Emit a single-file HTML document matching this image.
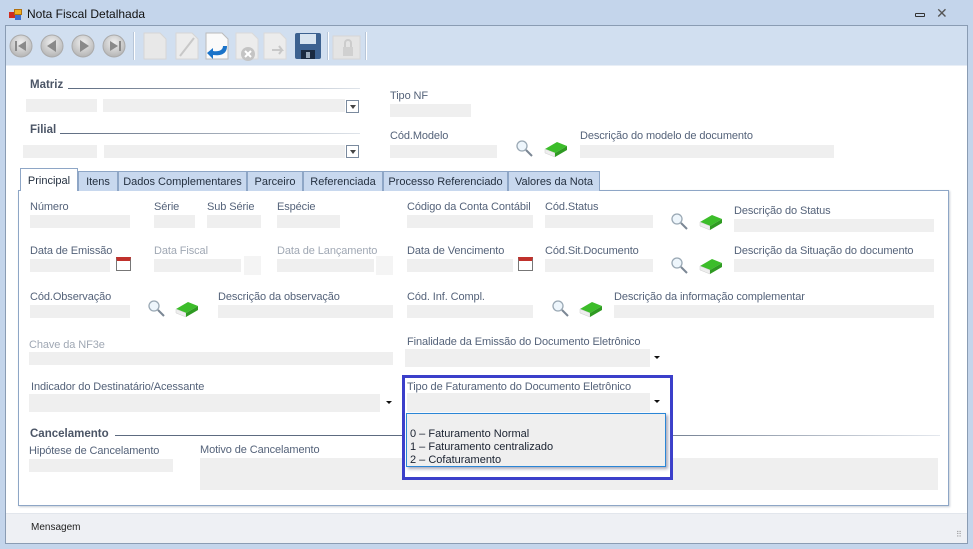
<!DOCTYPE html>
<html><head><meta charset="utf-8"><style>
*{margin:0;padding:0;box-sizing:border-box}
body{width:973px;height:549px;position:relative;overflow:hidden;background:#c4d5eb;font-family:"Liberation Sans",sans-serif;font-size:12px;color:#4d5b6e}
.a{position:absolute}
.l{position:absolute;white-space:nowrap;font-size:11px;color:#55637a;letter-spacing:-0.1px;top:0}
.f{position:absolute;background:#efefef}
.dis{color:#a0a8b4}
.dd{position:absolute;background:#fff;width:13px;height:13px;border:1px solid #7a8a9e}
.dd:after{content:"";position:absolute;left:3px;top:4px;border-left:3px solid transparent;border-right:3px solid transparent;border-top:4px solid #444}
.dt{position:absolute;width:14px;height:18px;background:#fff}
.dt:after{content:"";position:absolute;left:4px;top:7px;border-left:3px solid transparent;border-right:3px solid transparent;border-top:3px solid #111}
.b{position:absolute;font-weight:bold;font-size:11.5px;color:#4b5566}
.hl{position:absolute;height:1px;background:linear-gradient(to right,#5d6b80,#dfe4ea)}
.tab{position:absolute;top:171px;height:20px;background:#c8d8ee;border:1px solid #8ea6c6;border-bottom:none;font-size:11px;color:#243040;padding-top:4px;text-align:center;white-space:nowrap;overflow:hidden}
.cal{position:absolute;width:15px;height:14px;background:#fff;border:1px solid #777;border-top:4px solid #c0312c}
.calx{position:absolute;width:17px;height:19px;background:#f4f4f4}
</style></head><body>
<div class="a" style="left:9px;top:9px;width:13px;height:11px">
<div class="a" style="left:0;top:3px;width:6px;height:6px;background:#d02c20"></div>
<div class="a" style="left:5px;top:0;width:8px;height:6px;background:#f0b020;border:1px solid #b07010"></div>
<div class="a" style="left:6px;top:6px;width:6px;height:5px;background:#3d6fd0"></div></div>
<div class="a" style="left:27px;top:7px;font-size:12px;color:#111">Nota Fiscal Detalhada</div>
<div class="a" style="left:915px;top:13px;width:10px;height:4px;border:1px solid #333;border-radius:1px"></div>
<div class="a" style="left:936px;top:5px;font-size:14px;color:#555">✕</div>
<div class="a" style="left:5px;top:25px;width:963px;height:519px;background:#fff;border:1px solid #8a9cb3"></div>
<div class="a" style="left:6px;top:26px;width:961px;height:40px;background:#d1dff0;border-bottom:1px solid #e8eef6"></div>
<svg class="a" style="left:6px;top:28px" width="380" height="36">
<defs><radialGradient id="g" cx="50%" cy="35%" r="60%"><stop offset="0" stop-color="#f0f0f0"/><stop offset="1" stop-color="#b9b9b9"/></radialGradient></defs>
<g fill="url(#g)" stroke="#aaa"><circle cx="15" cy="18" r="11"/><circle cx="46" cy="18" r="11"/><circle cx="77" cy="18" r="11"/><circle cx="108" cy="18" r="11"/></g>
<g fill="#8a8a8a"><rect x="9" y="13" width="2" height="10"/><path d="M20 13 L12 18 L20 23Z"/><path d="M50 12 L41 18 L50 24Z"/><path d="M74 12 L83 18 L74 24Z"/><path d="M104 13 L112 18 L104 23Z"/><rect x="113" y="13" width="2" height="10"/></g>
<rect x="128" y="4" width="1" height="28" fill="#fff"/><rect x="127" y="4" width="1" height="28" fill="#b8c6d8"/>
<path d="M138 5h16l6 6v20h-22z" fill="#e8e8e8" stroke="#d6d6d6"/>
<path d="M170 5h16l6 6v20h-22z" fill="#ececec" stroke="#d6d6d6"/><path d="M174 28l14-18" stroke="#c8c8c8" stroke-width="2"/>
<path d="M200 5h16l6 6v20h-22z" fill="#fafafa" stroke="#bbb"/><path d="M221 18c0 8-6 10-14 9l0 4-6-6 6-5v3c6 1 10-1 10-5z" fill="#1a73c9"/>
<path d="M230 5h16l6 6v20h-22z" fill="#ececec" stroke="#dadada"/><circle cx="242" cy="26" r="7" fill="#c4c4c4"/><path d="M239 23l6 6M245 23l-6 6" stroke="#fff" stroke-width="2"/>
<path d="M258 5h16l6 6v20h-22z" fill="#ececec" stroke="#dadada"/><path d="M266 22h10l-3-4m3 4-3 4" stroke="#c8c8c8" stroke-width="2" fill="none"/>
<rect x="289" y="5" width="26" height="26" rx="2" fill="#3c6190"/><rect x="294" y="6" width="16" height="10" fill="#d8e4f0"/><rect x="295" y="22" width="14" height="9" fill="#1a2a40"/><rect x="300" y="24" width="4" height="6" fill="#9ab"/>
<rect x="322" y="4" width="1" height="28" fill="#fff"/><rect x="321" y="4" width="1" height="28" fill="#b8c6d8"/>
<rect x="327" y="8" width="27" height="23" fill="#e4e4e4" stroke="#d6d6d6"/><rect x="337" y="19" width="10" height="9" fill="#d0d0d0"/><path d="M339 19v-4a3 3 0 0 1 6 0v4" stroke="#ccc" stroke-width="2" fill="none"/>
<rect x="360" y="4" width="1" height="28" fill="#fff"/><rect x="359" y="4" width="1" height="28" fill="#b8c6d8"/>
</svg>
<div class="b" style="left:30px;top:79px">Matriz</div><div class="hl" style="left:68px;top:88px;width:292px"></div>
<div class="f" style="left:26px;top:99px;width:71px;height:13px"></div><div class="f" style="left:103px;top:99px;width:242px;height:13px"></div><div class="dd" style="left:346px;top:100px"></div>
<div class="b" style="left:30px;top:124px">Filial</div><div class="hl" style="left:60px;top:133px;width:300px"></div>
<div class="f" style="left:23px;top:145px;width:74px;height:13px"></div><div class="f" style="left:104px;top:145px;width:241px;height:13px"></div><div class="dd" style="left:346px;top:145px"></div>
<div class="l" style="left:390px;top:90px">Tipo NF</div><div class="f" style="left:390px;top:104px;width:81px;height:13px"></div>
<div class="l" style="left:390px;top:130px">Cód.Modelo</div><div class="f" style="left:390px;top:145px;width:107px;height:13px"></div>
<div class="l" style="left:580px;top:130px">Descrição do modelo de documento</div><div class="f" style="left:580px;top:145px;width:254px;height:13px"></div>
<div class="a" style="left:18px;top:190px;width:931px;height:316px;border:1px solid #8ea6c6;background:#fff;box-shadow:1px 1px 2px #c8ced6"></div>
<div class="tab" style="left:20px;top:168px;width:58px;height:23px;background:#fff;padding-top:6px">Principal</div>
<div class="tab" style="left:78px;width:40px">Itens</div>
<div class="tab" style="left:118px;width:129px">Dados Complementares</div>
<div class="tab" style="left:247px;width:56px">Parceiro</div>
<div class="tab" style="left:303px;width:80px">Referenciada</div>
<div class="tab" style="left:383px;width:125px">Processo Referenciado</div>
<div class="tab" style="left:508px;width:92px">Valores da Nota</div>
<div class="l" style="left:30px;top:201px">Número</div><div class="f" style="left:30px;top:215px;width:100px;height:13px"></div>
<div class="l" style="left:154px;top:201px">Série</div><div class="f" style="left:154px;top:215px;width:41px;height:13px"></div>
<div class="l" style="left:207px;top:201px">Sub Série</div><div class="f" style="left:207px;top:215px;width:54px;height:13px"></div>
<div class="l" style="left:277px;top:201px">Espécie</div><div class="f" style="left:277px;top:215px;width:63px;height:13px"></div>
<div class="l" style="left:407px;top:201px">Código da Conta Contábil</div><div class="f" style="left:407px;top:215px;width:126px;height:13px"></div>
<div class="l" style="left:545px;top:201px">Cód.Status</div><div class="f" style="left:545px;top:215px;width:108px;height:13px"></div>
<div class="l" style="left:734px;top:205px">Descrição do Status</div><div class="f" style="left:734px;top:219px;width:200px;height:13px"></div>
<div class="l" style="left:30px;top:245px">Data de Emissão</div><div class="f" style="left:30px;top:259px;width:80px;height:13px"></div><div class="cal" style="left:116px;top:257px"></div>
<div class="l dis" style="left:154px;top:245px">Data Fiscal</div><div class="f" style="left:154px;top:259px;width:87px;height:13px"></div><div class="calx" style="left:244px;top:256px"></div>
<div class="l dis" style="left:277px;top:245px">Data de Lançamento</div><div class="f" style="left:277px;top:259px;width:97px;height:13px"></div><div class="calx" style="left:376px;top:256px"></div>
<div class="l" style="left:407px;top:245px">Data de Vencimento</div><div class="f" style="left:407px;top:259px;width:106px;height:13px"></div><div class="cal" style="left:518px;top:257px"></div>
<div class="l" style="left:545px;top:245px">Cód.Sit.Documento</div><div class="f" style="left:545px;top:259px;width:108px;height:13px"></div>
<div class="l" style="left:734px;top:245px">Descrição da Situação do documento</div><div class="f" style="left:734px;top:259px;width:200px;height:13px"></div>
<div class="l" style="left:30px;top:291px">Cód.Observação</div><div class="f" style="left:30px;top:305px;width:100px;height:13px"></div>
<div class="l" style="left:218px;top:291px">Descrição da observação</div><div class="f" style="left:218px;top:305px;width:175px;height:13px"></div>
<div class="l" style="left:407px;top:291px">Cód. Inf. Compl.</div><div class="f" style="left:407px;top:305px;width:126px;height:13px"></div>
<div class="l" style="left:614px;top:291px">Descrição da informação complementar</div><div class="f" style="left:614px;top:305px;width:320px;height:13px"></div>
<svg class="a" style="left:0;top:0" width="973" height="549">
<defs><g id="m"><circle cx="6" cy="6" r="5" fill="#eef6fc" stroke="#9aa8b4" stroke-width="1.3"/><path d="M10 10l6 6" stroke="#7b8794" stroke-width="2"/></g>
<g id="e"><path d="M0 9l12-7 10 4-12 7z" fill="#3cbd2a"/><path d="M0 9l10 4v4l-10-4z" fill="#eee" stroke="#ccc" stroke-width=".5"/><path d="M10 13l12-7v4l-12 7z" fill="#2f9a22"/></g></defs>
<use href="#m" x="516" y="140"/><use href="#e" x="545" y="140"/>
<use href="#m" x="671" y="213"/><use href="#e" x="700" y="213"/>
<use href="#m" x="671" y="257"/><use href="#e" x="700" y="257"/>
<use href="#m" x="148" y="300"/><use href="#e" x="176" y="300"/>
<use href="#m" x="552" y="300"/><use href="#e" x="580" y="300"/>
</svg>
<div class="l dis" style="left:29px;top:339px">Chave da NF3e</div><div class="f" style="left:29px;top:352px;width:364px;height:13px"></div>
<div class="l" style="left:407px;top:336px">Finalidade da Emissão do Documento Eletrônico</div><div class="f" style="left:405px;top:349px;width:245px;height:18px"></div><div class="dt" style="left:650px;top:349px"></div>
<div class="l" style="left:31px;top:381px">Indicador do Destinatário/Acessante</div><div class="f" style="left:29px;top:394px;width:351px;height:18px"></div><div class="dt" style="left:382px;top:394px"></div>
<div class="b" style="left:30px;top:428px">Cancelamento</div><div class="hl" style="left:115px;top:435px;width:825px;background:linear-gradient(to right,#5d6b80,#5d6b80 60%,#e4e8ee)"></div>
<div class="l" style="left:29px;top:445px">Hipótese de Cancelamento</div><div class="f" style="left:29px;top:459px;width:144px;height:13px"></div>
<div class="l" style="left:200px;top:444px">Motivo de Cancelamento</div><div class="f" style="left:200px;top:458px;width:738px;height:32px"></div>
<div class="a" style="left:402px;top:375px;width:271px;height:105px;border:3px solid #3b3fca;background:#fff"></div>
<div class="l" style="left:407px;top:381px">Tipo de Faturamento do Documento Eletrônico</div>
<div class="f" style="left:407px;top:393px;width:243px;height:19px"></div><div class="dt" style="left:650px;top:393px"></div>
<div class="a" style="left:406px;top:413px;width:260px;height:54px;background:#efefef;border:1px solid #2a86d6;box-shadow:2px 2px 3px #aab;font-size:11px;color:#1a2230;line-height:13px;padding:14px 0 0 3px">0 – Faturamento Normal<br>1 – Faturamento centralizado<br>2 – Cofaturamento</div>
<div class="a" style="left:6px;top:513px;width:961px;height:30px;background:#eef0f4;border-top:1px solid #e2e6ec"></div>
<div class="a" style="left:31px;top:522px;font-size:10px;color:#222">Mensagem</div>
<div class="a" style="left:956px;top:530px;font-size:8px;color:#999;letter-spacing:-1px">⠿</div>
</body></html>
